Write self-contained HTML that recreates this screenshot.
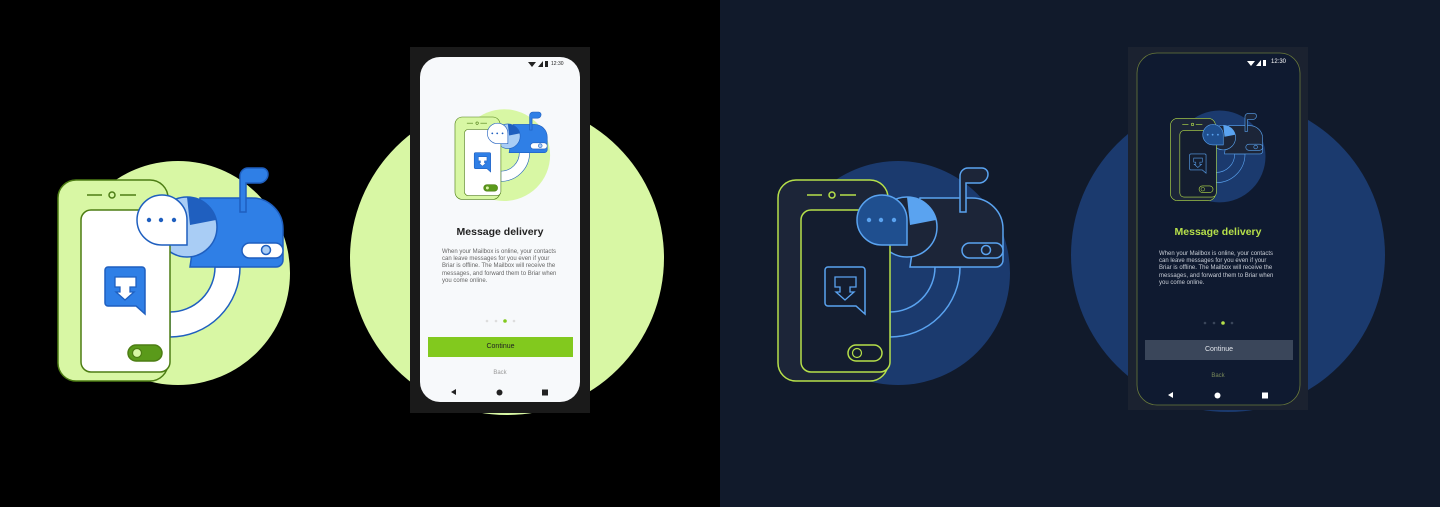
<!DOCTYPE html>
<html><head><meta charset="utf-8"><style>
*{margin:0;padding:0;box-sizing:border-box}
body{width:1440px;height:507px;overflow:hidden;position:relative;background:#000;font-family:"Liberation Sans",sans-serif}
.abs{position:absolute}
.txt{position:absolute;font-size:6px;line-height:7.2px;color:#666}
.ttl{position:absolute;font-size:10.5px;font-weight:bold;text-align:center;width:160px}
</style></head><body>
<div class="abs" style="left:720px;top:0;width:720px;height:507px;background:#111a2b"></div>
<svg class="abs" style="left:0;top:0" width="1440" height="507">
<defs>
<symbol id="ill" viewBox="0 0 260 250" width="260" height="250" overflow="visible">
<circle cx="138" cy="123" r="112" style="fill:var(--circ)"/>
<path d="M130 187 A70 70 0 0 0 200 117 L175 117 A45 45 0 0 1 130 162 Z" style="fill:var(--arc);stroke:var(--bl)" stroke-width="1.5"/>
<path d="M160 48 H212 A31 31 0 0 1 243 79 V110 A7 7 0 0 1 236 117 H150 Z" style="fill:var(--mb);stroke:var(--bls)" stroke-width="1.5"/>
<path d="M200 62 V26 A8 8 0 0 1 208 18 H222 A6 6 0 0 1 228 24 A9 9 0 0 1 220 33 H206 V62 Z" style="fill:var(--mb);stroke:var(--bls)" stroke-width="1.5"/>
<circle cx="147" cy="77" r="30" style="fill:var(--ring);stroke:var(--bls)" stroke-width="1.5"/>
<path d="M147 47 A30 30 0 0 1 176 70 L150 75 Z" style="fill:var(--bls)"/>
<rect x="202" y="93" width="41" height="15" rx="7.5" style="fill:var(--tg);stroke:var(--bls)" stroke-width="1.5"/>
<circle cx="226" cy="100" r="4.5" style="fill:var(--ring);stroke:var(--bls)" stroke-width="1.5"/>
<rect x="18" y="30" width="110" height="201" rx="18" style="fill:var(--ph);stroke:var(--gs)" stroke-width="1.5"/>
<rect x="41" y="60" width="89" height="162" rx="10" style="fill:var(--sc);stroke:var(--gs)" stroke-width="1.5"/>
<path d="M47 45 H62 M80 45 H96" style="stroke:var(--gs)" stroke-width="1.5"/>
<circle cx="72" cy="45" r="3" fill="none" style="stroke:var(--gs)" stroke-width="1.5"/>
<rect x="88" y="195" width="34" height="16" rx="8" style="fill:var(--tg2);stroke:var(--gs)" stroke-width="1.5"/>
<circle cx="97" cy="203" r="4.5" style="fill:var(--kn);stroke:var(--gs)" stroke-width="1.2"/>
<path d="M68 117 H102 A3 3 0 0 1 105 120 V164 L96 156 H68 A3 3 0 0 1 65 153 V120 A3 3 0 0 1 68 117 Z" style="fill:var(--ci);stroke:var(--bl)" stroke-width="1.5"/>
<path d="M75 127 H96 V137 H90 V142 H94 L85 150 L76 142 H80 V137 H75 Z" style="fill:var(--ar);stroke:var(--arS)" stroke-width="1.3"/>
<path d="M147 70 A25 25 0 1 0 122 95 H147 Z" style="fill:var(--bub);stroke:var(--bls)" stroke-width="1.5"/>
<circle cx="109" cy="70" r="2.2" style="fill:var(--dot)"/><circle cx="121" cy="70" r="2.2" style="fill:var(--dot)"/><circle cx="134" cy="70" r="2.2" style="fill:var(--dot)"/>
</symbol>
</defs>
<g style="--circ:#d8f7a4;--arc:#fff;--bl:#1f5fbf;--bls:#1f5fbf;--mb:#2f7fe6;--ring:#a9cdf5;--tg:#fff;--ph:#d8f7a4;--gs:#4d7d14;--sc:#fff;--tg2:#5a9a1a;--kn:#d8f7a4;--ci:#2f7fe6;--ar:#fff;--arS:#1f5fbf;--bub:#fff;--dot:#1f5fbf">
<use href="#ill" x="40" y="150"/>
<circle cx="507" cy="258" r="157" fill="#d8f7a4"/>
<rect x="410" y="47" width="180" height="366" fill="#1a1a1a"/>
<rect x="420" y="57" width="160" height="345" rx="20" fill="#f7f9fb"/>
<use href="#ill" x="447.6" y="104.7" width="106.6" height="102.5"/>
<rect x="428" y="337" width="145" height="20" fill="#82c91e"/>
<circle cx="487" cy="321" r="1.3" fill="#ddd"/><circle cx="496" cy="321" r="1.3" fill="#ddd"/><circle cx="505" cy="321" r="1.8" fill="#82c91e"/><circle cx="514" cy="321" r="1.3" fill="#ddd"/>
<path d="M451 392 L456 389 V395Z" fill="#222"/><circle cx="499.5" cy="392.5" r="3" fill="#222"/><rect x="542" y="389.5" width="6" height="6" fill="#222"/>
<path d="M528 62 L536 62 L532 67Z M538 67 L543 61 V67Z" fill="#222"/><rect x="545" y="61" width="3" height="6" fill="#222"/>
</g>
<g style="--circ:#1b3a6e;--arc:#1b3a6e;--bl:#5aa3f0;--bls:#5aa3f0;--mb:#1c2538;--ring:#1c2538;--tg:#1c2538;--ph:#1c2538;--gs:#b6e04a;--sc:#141d2f;--tg2:#141d2f;--kn:#141d2f;--ci:#141d2f;--ar:#141d2f;--arS:#5aa3f0;--bub:#1f4f8f;--dot:#5aa3f0">
<use href="#ill" x="760" y="150"/>
<circle cx="1228" cy="255" r="157" fill="#1b3a6e"/>
<rect x="1128" y="47" width="180" height="363" fill="#1b2230"/>
<rect x="1137" y="53" width="163" height="352" rx="20" fill="#0f1a30" stroke="#6a7a3a" stroke-width="0.8"/>
<use href="#ill" x="1163" y="106" width="106.6" height="102.5"/>
<rect x="1145" y="340" width="148" height="20" fill="#3a465a"/>
<circle cx="1205" cy="323" r="1.3" fill="#3a465a"/><circle cx="1214" cy="323" r="1.3" fill="#3a465a"/><circle cx="1223" cy="323" r="1.8" fill="#b6e04a"/><circle cx="1232" cy="323" r="1.3" fill="#3a465a"/>
<path d="M1168 395 L1173 392 V398Z" fill="#fff"/><circle cx="1217.5" cy="395.5" r="3" fill="#fff"/><rect x="1262" y="392.5" width="6" height="6" fill="#fff"/>
<path d="M1247 61 L1255 61 L1251 66Z M1256 66 L1261 60 V66Z" fill="#fff"/><rect x="1263" y="60" width="3" height="6" fill="#fff"/>
</g>
</svg>
<div class="abs" style="left:551px;top:61px;font-size:5px;color:#222">12:30</div>
<div class="abs" style="left:1271px;top:59px;font-size:6px;color:#fff">12:30</div>
<div class="ttl" style="left:420px;top:226px;color:#222">Message delivery</div>
<div class="txt" style="left:442px;top:249px;width:119px">When your Mailbox is online, your contacts can leave messages for you even if your Briar is offline. The Mailbox will receive the messages, and forward them to Briar when you come online.</div>
<div class="abs" style="left:428px;top:343px;width:145px;text-align:center;font-size:7px;color:#222">Continue</div>
<div class="abs" style="left:420px;top:370px;width:160px;text-align:center;font-size:6px;color:#999">Back</div>
<div class="ttl" style="left:1138px;top:226px;color:#b6e04a">Message delivery</div>
<div class="txt" style="left:1159px;top:251px;width:119px;color:#c8cdd6">When your Mailbox is online, your contacts can leave messages for you even if your Briar is offline. The Mailbox will receive the messages, and forward them to Briar when you come online.</div>
<div class="abs" style="left:1145px;top:346px;width:148px;text-align:center;font-size:7px;color:#e0e4ea">Continue</div>
<div class="abs" style="left:1138px;top:373px;width:160px;text-align:center;font-size:6px;color:#7a8a5a">Back</div>
</body></html>
